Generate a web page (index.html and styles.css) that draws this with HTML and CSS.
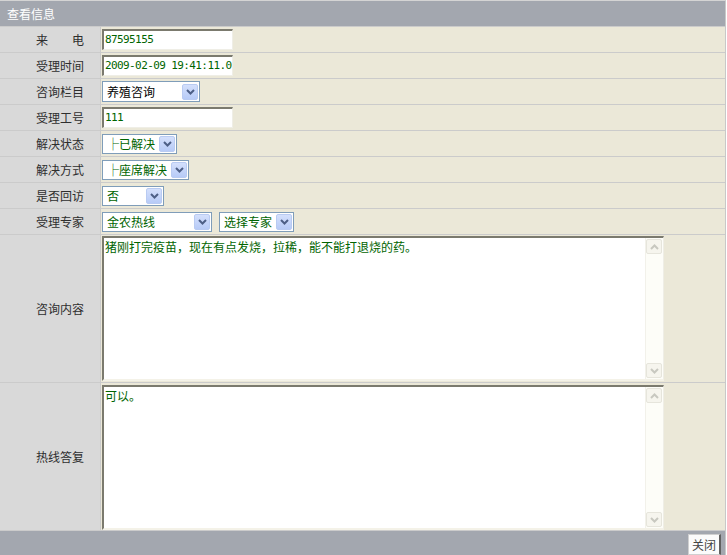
FILE: index.html
```html
<!DOCTYPE html>
<html>
<head>
<meta charset="utf-8">
<link rel="stylesheet" href="styles.css">
</head>
<body>
<div class="frame">
  <div class="head">查看信息</div>
  <div class="row">
    <div class="lab">来　　电</div>
    <div class="val"><div class="tin">87595155</div></div>
  </div>
  <div class="row">
    <div class="lab">受理时间</div>
    <div class="val"><div class="tin">2009-02-09 19:41:11.00</div></div>
  </div>
  <div class="row">
    <div class="lab">咨询栏目</div>
    <div class="val"><div class="sel w98 black"><span class="st">养殖咨询</span><span class="btn"><svg width="9" height="6" viewBox="0 0 9 6"><path d="M1 1 L4.5 4.5 L8 1" fill="none" stroke="#4d5f86" stroke-width="2"/></svg></span></div></div>
  </div>
  <div class="row">
    <div class="lab">受理工号</div>
    <div class="val"><div class="tin">111</div></div>
  </div>
  <div class="row">
    <div class="lab">解决状态</div>
    <div class="val"><div class="sel w74"><span class="st">├已解决</span><span class="btn"><svg width="9" height="6" viewBox="0 0 9 6"><path d="M1 1 L4.5 4.5 L8 1" fill="none" stroke="#4d5f86" stroke-width="2"/></svg></span></div></div>
  </div>
  <div class="row">
    <div class="lab">解决方式</div>
    <div class="val"><div class="sel w86"><span class="st">├座席解决</span><span class="btn"><svg width="9" height="6" viewBox="0 0 9 6"><path d="M1 1 L4.5 4.5 L8 1" fill="none" stroke="#4d5f86" stroke-width="2"/></svg></span></div></div>
  </div>
  <div class="row">
    <div class="lab">是否回访</div>
    <div class="val"><div class="sel w62"><span class="st">否</span><span class="btn"><svg width="9" height="6" viewBox="0 0 9 6"><path d="M1 1 L4.5 4.5 L8 1" fill="none" stroke="#4d5f86" stroke-width="2"/></svg></span></div></div>
  </div>
  <div class="row">
    <div class="lab">受理专家</div>
    <div class="val pair">
      <div class="sel w110"><span class="st">金农热线</span><span class="btn"><svg width="9" height="6" viewBox="0 0 9 6"><path d="M1 1 L4.5 4.5 L8 1" fill="none" stroke="#4d5f86" stroke-width="2"/></svg></span></div>
      <div class="sel w74"><span class="st">选择专家</span><span class="btn"><svg width="9" height="6" viewBox="0 0 9 6"><path d="M1 1 L4.5 4.5 L8 1" fill="none" stroke="#4d5f86" stroke-width="2"/></svg></span></div>
    </div>
  </div>
  <div class="row tall">
    <div class="lab">咨询内容</div>
    <div class="val top">
      <div class="ta">
        <div class="tatext">猪刚打完疫苗，现在有点发烧，拉稀，能不能打退烧的药。</div>
        <div class="sb">
          <div class="sbb"><svg width="9" height="6" viewBox="0 0 9 6"><path d="M1 5 L4.5 1.5 L8 5" fill="none" stroke="#c8c8c0" stroke-width="2"/></svg></div>
          <div class="sbb"><svg width="9" height="6" viewBox="0 0 9 6"><path d="M1 1 L4.5 4.5 L8 1" fill="none" stroke="#c8c8c0" stroke-width="2"/></svg></div>
        </div>
      </div>
    </div>
  </div>
  <div class="row tall2">
    <div class="lab">热线答复</div>
    <div class="val top">
      <div class="ta">
        <div class="tatext">可以。</div>
        <div class="sb">
          <div class="sbb"><svg width="9" height="6" viewBox="0 0 9 6"><path d="M1 5 L4.5 1.5 L8 5" fill="none" stroke="#c8c8c0" stroke-width="2"/></svg></div>
          <div class="sbb"><svg width="9" height="6" viewBox="0 0 9 6"><path d="M1 1 L4.5 4.5 L8 1" fill="none" stroke="#c8c8c0" stroke-width="2"/></svg></div>
        </div>
      </div>
    </div>
  </div>
  <div class="foot"><span class="close">关闭</span></div>
</div>
</body>
</html>
```
FILE: styles.css
```css
html, body {
  margin: 0;
  padding: 0;
  background: #ffffff;
  font-family: "Noto Sans CJK SC", "DejaVu Sans", sans-serif;
  font-size: 12px;
}
.frame {
  width: 725px;
  border-top: 1px solid #d4d4d4;
  border-right: 1px solid #c8c8c8;
  display: flex;
  flex-direction: column;
  gap: 1px;
  background: #cbcbcb;
}
.head {
  height: 25px;
  line-height: 25px;
  background: #a3a7af;
  color: #ffffff;
  padding-left: 7px;
}
.row {
  display: flex;
  gap: 1px;
  height: 25px;
}
.row.tall { height: 147px; }
.row.tall2 { height: 147px; }
.lab {
  width: 100px;
  flex: none;
  background: #d9d9d9;
  color: #2e2e2e;
  display: flex;
  align-items: center;
  justify-content: flex-end;
  padding-right: 16px;
  box-sizing: border-box;
}
.val {
  flex: 1;
  background: #ebe8d8;
  display: flex;
  align-items: center;
  padding-left: 1px;
}
.val.top {
  align-items: flex-start;
  padding-top: 1px;
}
.val.pair { gap: 7px; }
.tin {
  width: 131px;
  height: 21px;
  box-sizing: border-box;
  background: #ffffff;
  border-top: 2px solid #7b7a6e;
  border-left: 2px solid #7b7a6e;
  border-right: 1px solid #efeee6;
  border-bottom: 1px solid #efeee6;
  color: #006400;
  line-height: 18px;
  padding-left: 1px;
  white-space: nowrap;
  overflow: hidden;
  font-family: "DejaVu Sans Mono", "Liberation Mono", monospace;
  font-size: 11px;
  letter-spacing: -0.6px;
}
.sel {
  height: 20px;
  box-sizing: border-box;
  border: 1px solid #7f9db9;
  background: #ffffff;
  display: flex;
  align-items: center;
  justify-content: space-between;
  padding: 1px;
  color: #006400;
}
.sel.black { color: #000000; height: 21px; }
.sel .st { padding-left: 3px; white-space: nowrap; }
.sel .btn {
  width: 16px;
  height: 16px;
  box-sizing: border-box;
  border: 1px solid #b9cbf2;
  border-radius: 2px;
  background: linear-gradient(#d4e0fc, #b7cbf7);
  display: flex;
  align-items: center;
  justify-content: center;
}
.w98 { width: 98px; }
.w74 { width: 75px; }
.w86 { width: 87px; }
.w62 { width: 62px; }
.w110 { width: 110px; }
.ta {
  width: 562px;
  height: 145px;
  box-sizing: border-box;
  background: #ffffff;
  border-top: 2px solid #7b7a6e;
  border-left: 2px solid #7b7a6e;
  border-right: 1px solid #efeee6;
  border-bottom: 2px solid #f4f2e8;
  display: flex;
}
.row.tall2 .ta { height: 145px; margin-top: 1px; }
.tatext {
  flex: 1;
  color: #006400;
  padding: 2px 0 0 1px;
  line-height: 14px;
}
.sb {
  width: 16px;
  background: #fdfdf8;
  border-left: 1px solid #f2f1ea;
  display: flex;
  flex-direction: column;
  justify-content: space-between;
  padding: 1px 1px 1px 0;
}
.sbb {
  height: 15px;
  box-sizing: border-box;
  border: 1px solid #e6e5dc;
  border-radius: 2px;
  background: #f6f5ee;
  display: flex;
  align-items: center;
  justify-content: center;
}
.foot {
  height: 24px;
  background: #a3a7af;
  display: flex;
  align-items: flex-end;
  justify-content: flex-end;
  padding-right: 4px;
}
.close {
  width: 33px;
  height: 21px;
  box-sizing: border-box;
  background: #fbfbfb;
  border: 1px solid #d0d0d0;
  border-right: 2px solid #606060;
  color: #444444;
  display: flex;
  align-items: center;
  justify-content: center;
}
```
